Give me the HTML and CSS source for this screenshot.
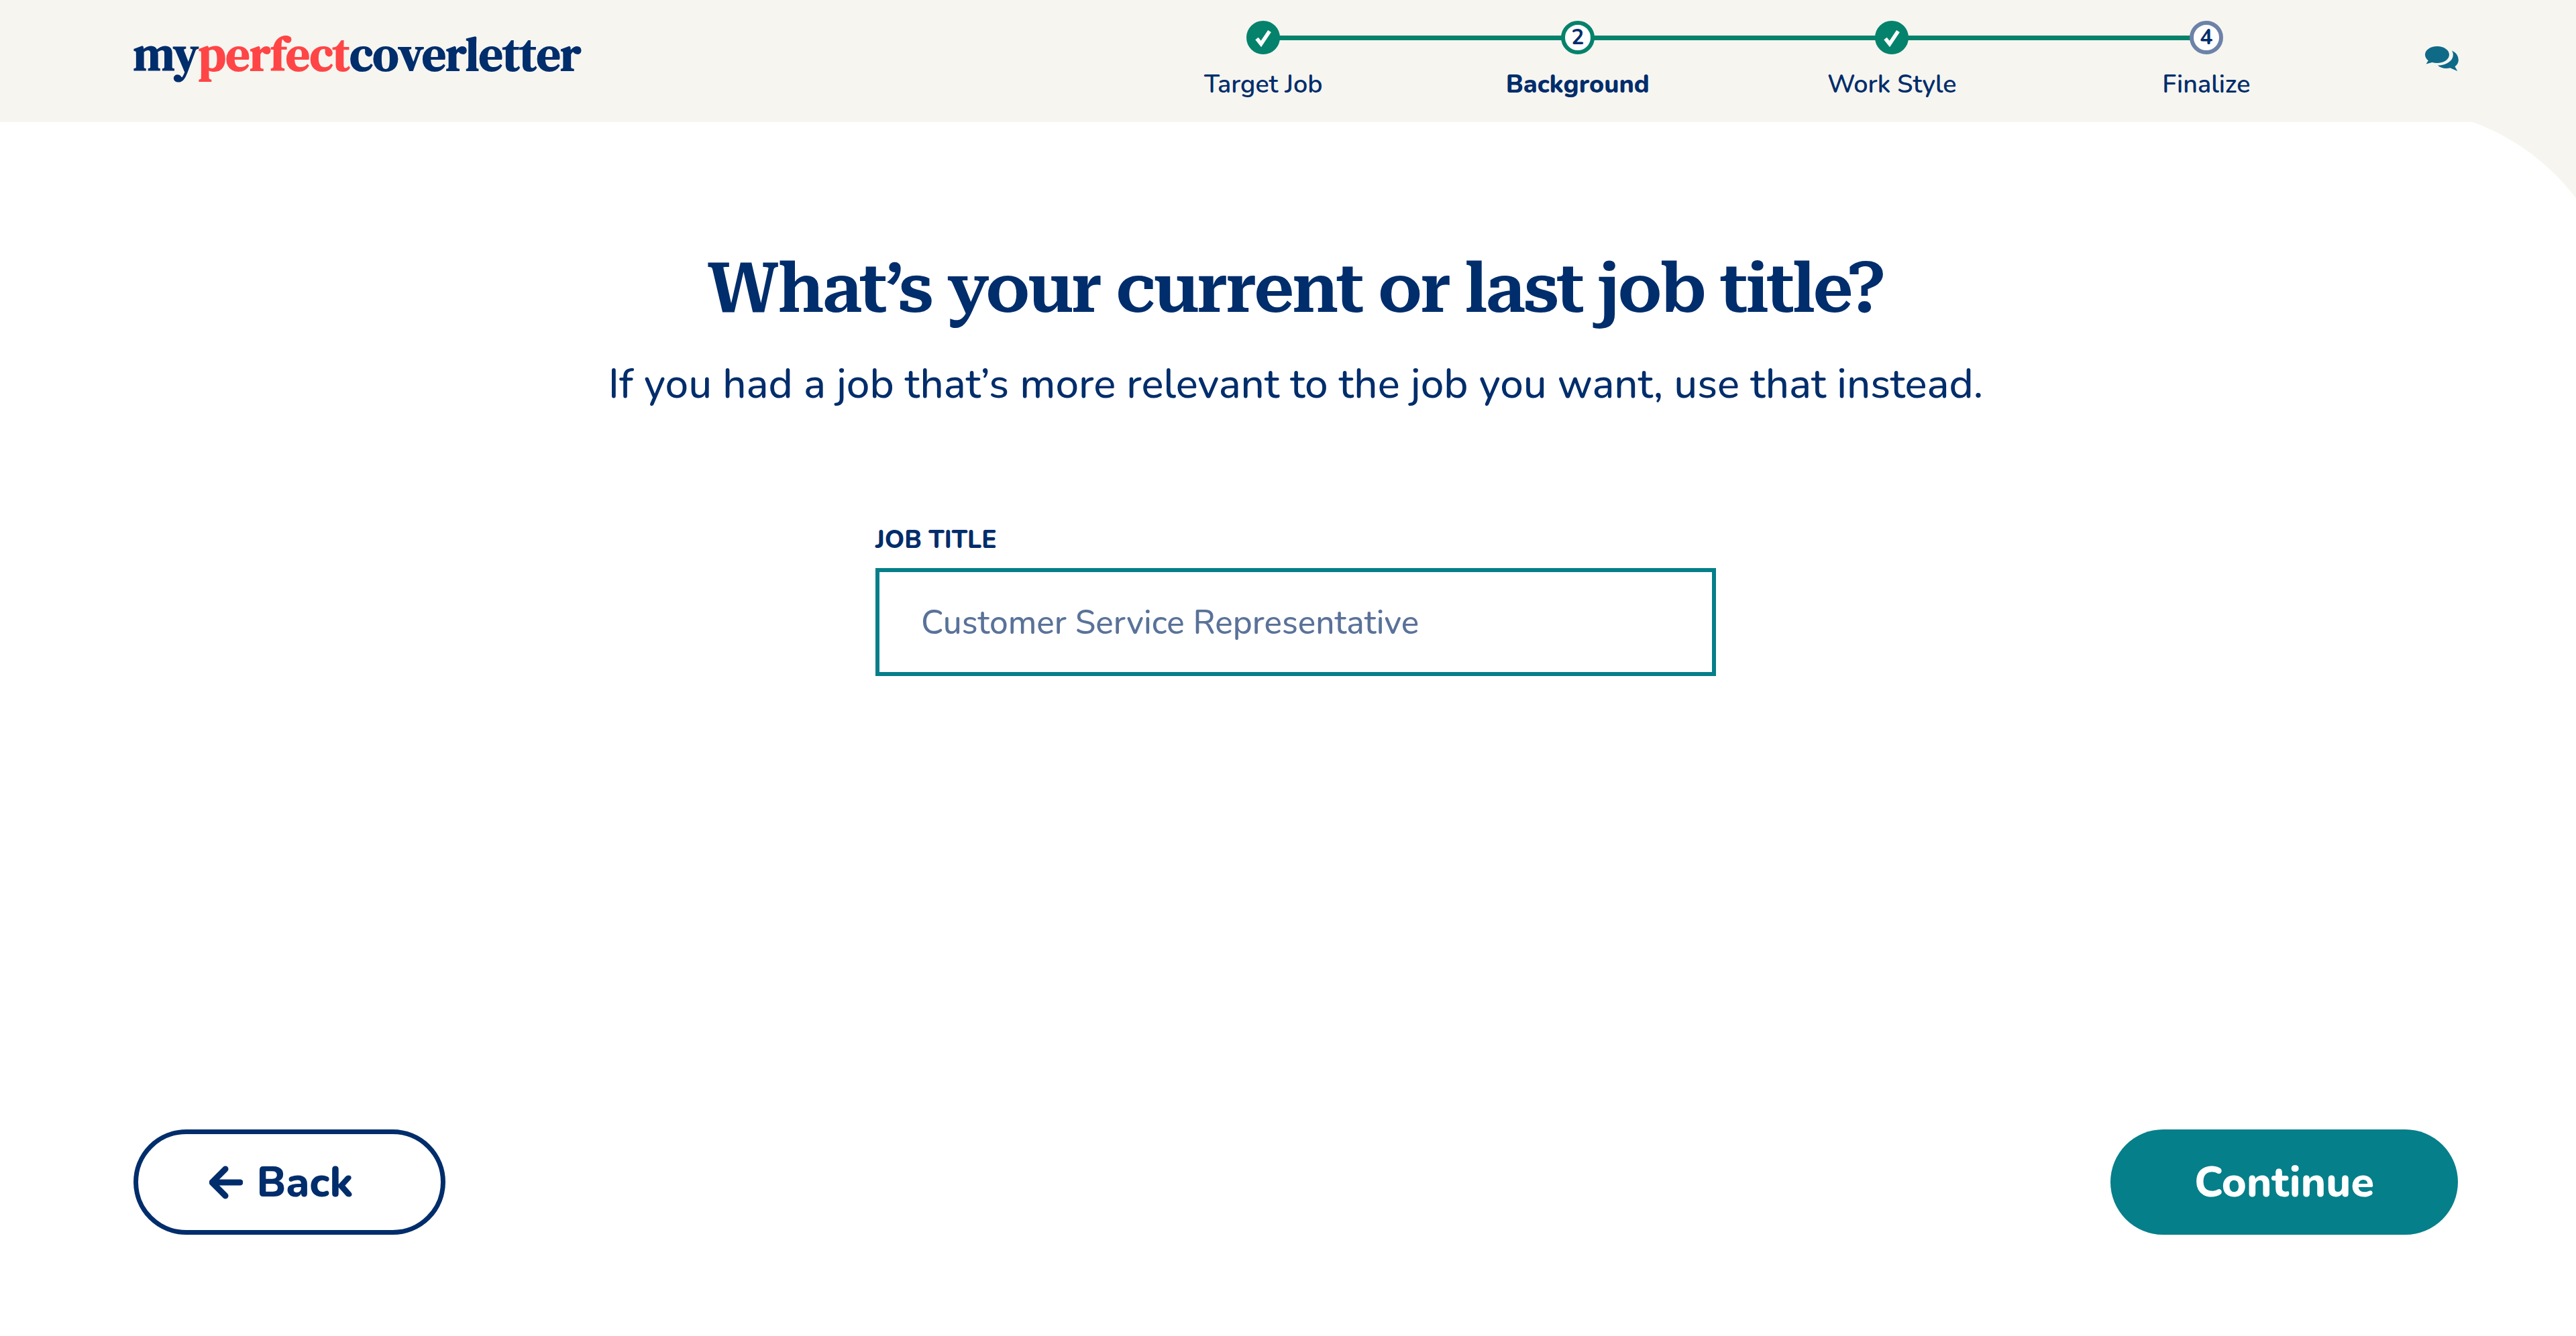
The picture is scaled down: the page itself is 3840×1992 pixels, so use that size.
FILE: index.html
```html
<!DOCTYPE html>
<html lang="en">
<head>
<meta charset="utf-8">
<title>My Perfect Cover Letter</title>
<link rel="stylesheet" href="styles.css">
</head>
<body>
<div class="page">
  <header class="topbar">
    <div class="logo">my<span class="logo-red">perfect</span>coverletter</div>
    <ol class="stepper">
      <li class="step done">
        <span class="dot"><svg class="tick" viewBox="0 0 24 24"><path d="M6 13l4 5 8-12"/></svg></span>
        <span class="step-label">Target Job</span>
      </li>
      <li class="step current">
        <span class="dot">2</span>
        <span class="step-label">Background</span>
      </li>
      <li class="step done">
        <span class="dot"><svg class="tick" viewBox="0 0 24 24"><path d="M6 13l4 5 8-12"/></svg></span>
        <span class="step-label">Work Style</span>
      </li>
      <li class="step todo">
        <span class="dot">4</span>
        <span class="step-label">Finalize</span>
      </li>
    </ol>
    <svg class="chat" viewBox="0 0 50 38">
      <path d="M18 0C8 0 0 5.500 0 12.500c0 3.500 1.800 6.500 4.800 8.800L1.500 26.500l9-2.400c2.300.6 5 1 7.500 1 10 0 18-5.600 18-12.600S28 0 18 0z"/>
      <path d="M40 6.500c1.200 2 1.800 4 1.800 6.200 0 9-9.500 15.400-22.800 15.800 3 2.800 7.500 4.500 12.500 4.500 2 0 4-.3 5.800-.8l11 4.800-3.800-6.800c3.300-2.400 5.300-5.800 5.300-9.500 0-6-3.500-11.500-9.800-14.200z"/>
    </svg>
  </header>
  <main class="content">
    <h1 class="title">What’s your current or last job title?</h1>
    <p class="subtitle">If you had a job that’s more relevant to the job you want, use that instead.</p>
    <form class="field">
      <label class="field-label" for="job">JOB TITLE</label>
      <input class="field-input" id="job" type="text" placeholder="Customer Service Representative">
    </form>
    <div class="actions">
      <a class="btn btn-back">
        <svg class="arrow" viewBox="0 0 50 50"><path d="M46 25H5M24 5L4 25l20 20"/></svg>
        Back
      </a>
      <a class="btn btn-next">Continue</a>
    </div>
  </main>
</div>
</body>
</html>
```
FILE: styles.css
```css
* { box-sizing: border-box; }
html, body { margin: 0; height: 100%; }
body {
  background: #f6f5f0;
  color: #002d6b;
  font-family: "Nunito", "Noto Sans", sans-serif;
  overflow: hidden;
}
.page { display: flex; flex-direction: column; height: 1992px; }

.topbar {
  position: relative;
  z-index: 1;
  display: flex;
  align-items: flex-start;
  height: 182px;
  padding-left: 199px;
  flex: none;
  background: #f6f5f0;
}
.logo {
  width: 1450px;
  flex: none;
  padding-top: 37px;
  font-family: "DM Serif Text", "Liberation Serif", serif;
  font-weight: 700;
  font-size: 70.700px;
  line-height: 88px;
  color: #002d6b;
}
.logo-red { color: #ff4545; }

.stepper {
  display: grid;
  grid-template-columns: repeat(4, 468.5px);
  list-style: none;
  margin: 0;
  padding: 31px 0 0;
  flex: none;
}
.step {
  position: relative;
  display: flex;
  flex-direction: column;
  align-items: center;
  gap: 20px;
}
.step:not(:last-child)::after {
  content: "";
  position: absolute;
  top: 22px;
  left: 50%;
  width: 100%;
  height: 7px;
  background: #05826b;
}
.dot {
  position: relative;
  z-index: 1;
  display: flex;
  align-items: center;
  justify-content: center;
  width: 50px;
  height: 50px;
  border-radius: 50%;
  font-size: 32px;
  font-weight: 700;
  line-height: 1;
  background: #fff;
  border: 6px solid #05826b;
}
.done .dot { background: #05826b; }
.todo .dot { border-color: #6c82a8; }
.tick { width: 38px; height: 38px; flex: none; }
.tick path { fill: none; stroke: #fff; stroke-width: 3.600; }
.step-label {
  font-size: 37.700px;
  font-weight: 600;
  line-height: 50px;
  white-space: nowrap;
}
.current .step-label { font-weight: 800; }

.chat {
  flex: none;
  width: 50px;
  height: 38px;
  margin: 69px 0 0 92px;
  fill: #0f6a88;
}

.content {
  flex: 1;
  display: flex;
  flex-direction: column;
  align-items: center;
  background: #fff;
  margin-top: -21px;
  margin-right: -69px;
  border-top-right-radius: 340px;
  padding: 21px 245px 0 199px;
}
.title {
  margin: 183px 0 0;
  font-family: "Roboto Serif", "Liberation Serif", serif;
  font-weight: 650;
  font-size: 104px;
  line-height: 130px;
  letter-spacing: -2.850px;
  white-space: nowrap;
  color: #002d6b;
}
.subtitle {
  margin: 36px 0 0;
  font-size: 61.800px;
  font-weight: 500;
  line-height: 84px;
  white-space: nowrap;
}
.field {
  display: flex;
  flex-direction: column;
  width: 1253px;
  margin-top: 165px;
}
.field-label {
  font-size: 37px;
  line-height: 50px;
  font-weight: 800;
  margin-bottom: 17px;
}
.field-input {
  height: 161px;
  padding: 2px 62px 0;
  border: 6px solid #057f8a;
  border-radius: 0;
  background: #fff;
  outline: none;
  font-family: inherit;
  font-size: 49.500px;
  font-weight: 500;
  color: #5a7299;
}
.field-input::placeholder { color: #5a7299; opacity: 1; }

.actions {
  display: flex;
  justify-content: space-between;
  align-items: center;
  align-self: stretch;
  margin-top: 676px;
}
.btn {
  display: flex;
  align-items: center;
  justify-content: center;
  height: 157px;
  border-radius: 79px;
  font-size: 63px;
  font-weight: 800;
}
.btn-back {
  width: 465px;
  gap: 20px;
  padding-right: 24px;
  border: 7px solid #002d6b;
  color: #002d6b;
}
.arrow { width: 50px; height: 50px; flex: none; fill: none; stroke: #002d6b; stroke-width: 9; stroke-linecap: round; stroke-linejoin: round; }
.btn-next {
  width: 518px;
  background: #057f8a;
  color: #fff;
}
```
